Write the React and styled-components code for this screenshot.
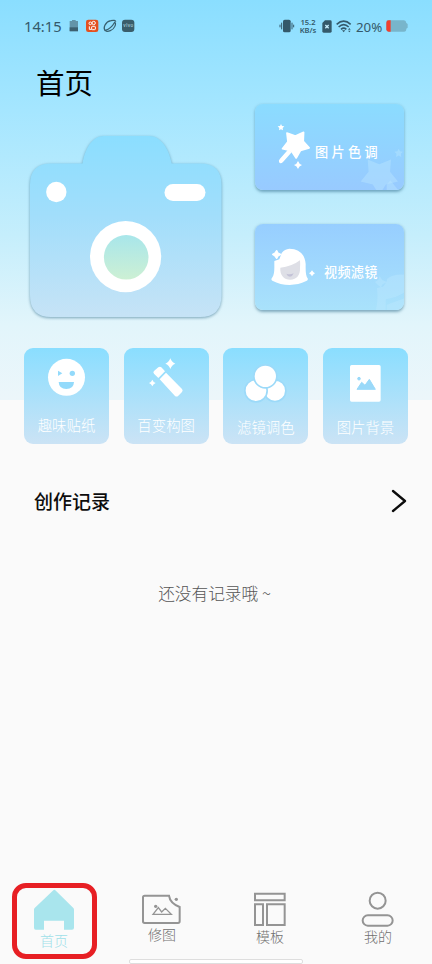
import React from "react";
import styled, { createGlobalStyle } from "styled-components";

const tools = [
  { label: "趣味贴纸", icon: "sticker", drop: 0 },
  { label: "百变构图", icon: "wand", drop: 0 },
  { label: "滤镜调色", icon: "colors", drop: 2 },
  { label: "图片背景", icon: "picture", drop: 2 },
];

const tabs = [
  { label: "首页", icon: "home", active: true, gap: 0 },
  { label: "修图", icon: "edit", gap: -6 },
  { label: "模板", icon: "template", gap: -4 },
  { label: "我的", icon: "me", gap: -4 },
];

const StatusIcons = () => (
  <svg width="68" height="16" viewBox="0 0 204 48">
    <path d="M8 9h7V6h11v3h7v30H8z" fill="#6394a9" />
    <path d="M8 28h25v12H8z" fill="#3d6070" />
    <rect x="57" y="5" width="37" height="37" rx="7" fill="#e4501f" />
    <g fill="none" stroke="#fff" strokeWidth="3">
      <circle cx="70" cy="16" r="4" />
      <circle cx="80" cy="15" r="5" />
      <rect x="74" y="25" width="11" height="10" rx="2" />
      <path d="M67 25v9h7" />
    </g>
    <g fill="none" stroke="#38606f" strokeWidth="4">
      <path d="M115 38c-8-8 0-27 17-30 8-2 14-1 14 3" />
      <path d="M143 13c6 4 0 20-13 25-8 3-13 2-15-1 11-3 22-13 28-24z" strokeWidth="3.500" />
    </g>
    <rect x="165" y="5" width="37" height="37" rx="9" fill="#3a5d6b" />
    <text x="169" y="28" fontSize="13" fill="#c5e6f2" fontFamily="Inter, sans-serif" textLength="29">
      vivo
    </text>
  </svg>
);

const VibrateIcon = () => (
  <svg width="16" height="14" viewBox="0 0 48 42">
    <rect x="12" y="2" width="23" height="38" rx="5" fill="#34596a" />
    <path d="M8 11v20M39 11v20M3 17v8M44 17v8" stroke="#34596a" strokeWidth="3" />
  </svg>
);

const SimIcon = () => (
  <svg width="10" height="13" viewBox="0 0 30 39">
    <path d="M9 1h16q4 0 4 4v29q0 4-4 4H5q-4 0-4-4V9z" fill="#34596a" />
    <path d="M10 15l10 10M20 15L10 25" stroke="#c4ecfa" strokeWidth="4" />
  </svg>
);

const WifiIcon = () => (
  <svg width="16" height="13" viewBox="0 0 48 39" fill="none" stroke="#34596a" strokeWidth="5">
    <path d="M2 13Q23-6 44 13M8 21Q23 7 38 21M15 28q8-7 16 0" />
    <path d="M18 31h10l-5 6z" fill="#34596a" stroke="none" />
    <path d="M36 29l4-5 4 5zM36 32l4 5 4-5z" fill="#34596a" stroke="none" />
  </svg>
);

const BatteryIcon = () => (
  <svg width="22" height="12" viewBox="0 0 66 36">
    <path d="M8 1h46q6 0 7 8l4 3v11l-4 3q0 9-7 9H8q-7 0-7-7V8q0-7 7-7z" fill="#78b5cb" />
    <path d="M14 1H8Q1 1 1 8v20q0 7 7 7h6z" fill="#f0402f" />
  </svg>
);

const Camera = () => (
  <svg width="208" height="196" viewBox="22 130 208 196">
    <defs>
      <linearGradient id="body" x1="0" y1="135" x2="0" y2="317" gradientUnits="userSpaceOnUse">
        <stop offset="0" stopColor="#8bdeff" />
        <stop offset="0.45" stopColor="#a2defb" />
        <stop offset="1" stopColor="#c6e3f6" />
      </linearGradient>
      <linearGradient id="lens" x1="0" y1="0" x2="0" y2="1">
        <stop offset="0" stopColor="#a8e6ea" />
        <stop offset="1" stopColor="#cdf0d4" />
      </linearGradient>
    </defs>
    <Shadowed>
      <path
        d="M51 163.500H82.500C85 149 92 136 104 136H149C161 136 169 149 171.700 163.500H200Q221.500 163.500 221.500 185V295Q221.500 317 200 317H51Q30 317 30 295V185Q30 163.500 51 163.500Z"
        fill="url(#body)"
      />
    </Shadowed>
    <circle cx="56.300" cy="192" r="10.200" fill="#fff" />
    <rect x="164.500" y="184" width="41" height="17" rx="8.500" fill="#fff" />
    <circle cx="125.600" cy="256.700" r="35.600" fill="#fff" />
    <circle cx="126.200" cy="257.300" r="22.300" fill="url(#lens)" />
  </svg>
);

// five points, one of them facing down, centred on 0,0
const Star = (props) => (
  <polygon
    points="0,42 -14,19.500 -40,13 -23,-7.500 -25,-34 0,-24 25,-34 23,-7.500 40,13 14,19.500"
    strokeLinejoin="round"
    {...props}
  />
);

const SmallStar = (props) => (
  <polygon points="0,-10 3,-4 10,-3 5,2 6,9 0,6 -6,9 -5,2 -10,-3 -3,-4" {...props} />
);

const StarIcon = () => (
  <svg width="34" height="48" viewBox="112 99 102 144" fill="#fff">
    <Star transform="translate(168 162) rotate(-2)" stroke="#fff" strokeWidth="5" />
    <path d="M147 177L156 187L130 216Q122 224 118 216Q116 212 121 206Z" />
    <SmallStar transform="translate(124 112)" />
    <path d="M175 213q3 9 12 12q-9 3-12 12q-3-9-12-12q9-3 12-12z" />
  </svg>
);

const HeadIcon = () => (
  <svg width="45" height="38" viewBox="93 118 135 114" fill="#fff">
    <path d="M148 120C180 121 195 139 197 166C197 185 196 200 204 211Q203 216 197 218C170 232 127 233 97 216Q92 212 96 208C104 196 103 185 103 157L118 152L125 133Q134 121 148 120Z" />
    <path d="M121 177Q155 174 180 155Q181 166 180 177C181 200 170 212 151 213C132 213 119 199 121 177Z" fill="#dedfe6" />
    <path d="M139 195Q150 199 161 194Q158 203 150 204Q142 203 139 195Z" fill="#c3c2d6" />
    <path d="M110 126l4 7 8 4-8 5-4 7-5-7-7-5 7-4z" stroke="#fff" strokeWidth="4" strokeLinejoin="round" />
    <path d="M216 185q3 6 9 9q-6 3-9 9q-3-6-9-9q6-3 9-9z" />
  </svg>
);

const ToolIcon = ({ name }) => (
  <svg width="85" height="60" viewBox="0 0 255 180" fill="#fff">
    {name === "sticker" && (
      <>
        <circle cx="127.500" cy="88" r="55.500" />
        <g fill="#93dafb">
          <circle cx="145" cy="76" r="8" />
          <path d="M102 68l13 8-13 8zM104 102h46q-1 21-23 21t-23-21z" />
        </g>
      </>
    )}
    {name === "wand" && (
      <>
        <path d="M103 58Q108 54 112 58L123 70L103 90L90 77Q86 73 90 69Z" />
        <path d="M126 74L174 123Q178 127 174 132L163 143Q158 148 153 144L107 94Z" />
        <path d="M139 31q4 12 15 16q-11 4-15 16q-4-12-15-16q11-4 15-16zM85 95q3 8 10 10q-7 2-10 10q-3-8-10-10q7-2 10-10z" />
      </>
    )}
    {name === "colors" && (
      <g stroke="#9cdaf9" strokeWidth="5">
        <circle cx="156" cy="128" r="32.500" />
        <circle cx="99" cy="128" r="33.500" />
        <circle cx="127" cy="85" r="34.500" />
      </g>
    )}
    {name === "picture" && (
      <>
        <rect x="81" y="51" width="92" height="110" rx="5" />
        <g fill="#9ad9f9" stroke="#9ad9f9" strokeLinejoin="round" strokeWidth="3">
          <circle cx="108" cy="92" r="4" />
          <path d="M102 124l14-21 10 9 13-18 18 30z" />
        </g>
      </>
    )}
  </svg>
);

const TabIcon = ({ name }) => (
  <svg width="48" height="44" viewBox="0 0 144 132" fill="none" stroke="#949494" strokeWidth="6">
    {name === "home" && (
      <path
        d="M70 4Q73 1 76 4L130 57Q132 59 132 62V116Q132 122 126 122H102V95H42V122H17Q12 122 12 116V62Q12 59 14 57Z"
        fill="#a9e5ed"
        stroke="none"
      />
    )}
    {name === "edit" && (
      <>
        <path d="M20 20H93Q96 43 125 54V97Q125 102 120 102H20Q15 102 15 97V25Q15 20 20 20Z" />
        <path d="M45 76L61 56L71 69L82 58L100 76Z" strokeWidth="4" />
        <g fill="#949494" stroke="none">
          <circle cx="53" cy="52" r="5" />
          <circle cx="115" cy="31" r="5" />
        </g>
      </>
    )}
    {name === "template" && (
      <path d="M27 14H116V34H27ZM27 46H51V108H27ZM63 46H116V108H63Z" />
    )}
    {name === "me" && (
      <>
        <circle cx="71" cy="35" r="24" />
        <rect x="26" y="79" width="90" height="31" rx="15.500" />
      </>
    )}
  </svg>
);

const App = () => {
  return (
    <Page>
      <GlobalStyle />
      <StatusBar>
        <Clock>14:15</Clock>
        <StatusIcons />
        <StatusRight>
          <VibrateIcon />
          <Speed>15.2 KB/s</Speed>
          <SimIcon />
          <WifiIcon />
          <Percent>20%</Percent>
          <BatteryIcon />
        </StatusRight>
      </StatusBar>
      <Title>首页</Title>
      <Hero>
        <Camera />
        <Cards>
          <Card $from="#8bdcff" $to="#98caff">
            <Decoration width="149" height="86" viewBox="46 39 447 258">
              <Star transform="translate(419 253) scale(1.400)" />
              <path d="M441 281L452 268L482 305H441Z" />
              <SmallStar transform="translate(477 186) scale(1.300)" />
            </Decoration>
            <StarIcon />
            <CardLabel $left={4} $top={10} $space={3.3}>图片色调</CardLabel>
          </Card>
          <Card $from="#97ceff" $to="#a9e2fb">
            <Decoration width="149" height="86" viewBox="46 36 447 258">
              <path d="M420 192l8 12 14 6-13 7-6 9-9-8-8-8 10-7zM442 201Q460 184 497 188V240Q470 258 438 262V294H409Q416 265 412 228L430 224L441 209ZM441 278L497 258V294H441Z" />
            </Decoration>
            <HeadIcon />
            <CardLabel $left={8} $top={9} $space={0.2}>视频滤镜</CardLabel>
          </Card>
        </Cards>
      </Hero>
      <Tools>
        {tools.map((tool) => (
          <Tool key={tool.label}>
            <ToolIcon name={tool.icon} />
            <ToolLabel $drop={tool.drop}>{tool.label}</ToolLabel>
          </Tool>
        ))}
      </Tools>
      <SectionHeader>
        <h2>创作记录</h2>
        <svg width="16" height="24" viewBox="0 0 16 24" fill="none" stroke="#0c0c0c" strokeWidth="2.300" strokeLinecap="round">
          <path d="M2 2L14 12L2 22" strokeLinejoin="round" />
        </svg>
      </SectionHeader>
      <Empty>还没有记录哦 ~</Empty>
      <TabBar>
        {tabs.map((tab) => (
          <Tab key={tab.label} $active={tab.active}>
            <TabIcon name={tab.icon} />
            <TabLabel $gap={tab.gap}>{tab.label}</TabLabel>
            {tab.active && <Highlight />}
          </Tab>
        ))}
        <HomeIndicator />
      </TabBar>
    </Page>
  );
};

export default App;

const GlobalStyle = createGlobalStyle`
  * {
    box-sizing: border-box;
  }
  body {
    margin: 0;
    font-family: "Noto Sans CJK SC", sans-serif;
  }
  svg {
    display: block;
    flex-shrink: 0;
  }
`;

const Page = styled.div`
  width: 432px;
  height: 964px;
  overflow: hidden;
  display: flex;
  flex-direction: column;
  background: linear-gradient(#8adeff 0, #a5e6ff 110px, #c5eefc 235px, #e2f5fb 325px, #ecf6fa 400px, #fafafa 400px);
`;

const StatusBar = styled.div`
  height: 52px;
  padding: 0 24px;
  display: flex;
  align-items: center;
  color: #34596a;
  font-family: "Noto Sans", sans-serif;
`;

const Clock = styled.span`
  width: 43px;
  font-size: 14.700px;
  line-height: 20px;
  white-space: nowrap;
`;

const StatusRight = styled.div`
  display: flex;
  align-items: center;
  margin-left: auto;
`;

const Speed = styled.div`
  width: 20px;
  margin: 0 4px 0 3px;
  font-size: 7.600px;
  font-weight: 600;
  line-height: 8px;
  text-align: center;

  & + svg {
    margin-right: 4px;
  }
`;

const Percent = styled.span`
  width: 26px;
  margin: 1px 4px 0;
  font-size: 13.300px;
  line-height: 18px;
`;

const Title = styled.h1`
  height: 52px;
  margin: 0;
  padding: 9px 0 0 36px;
  font-size: 28.500px;
  font-weight: 400;
  line-height: 42px;
  color: #000;
`;

const Hero = styled.div`
  height: 244px;
  padding: 0 28px 0 22px;
  display: flex;
  justify-content: space-between;

  > svg {
    margin-top: 26px;
  }
`;

const Shadowed = styled.g`
  filter: drop-shadow(0 1px 1.500px rgba(50, 110, 140, 0.6));
`;

const Cards = styled.div`
  display: flex;
  flex-direction: column;
  gap: 34px;
`;

const Card = styled.div`
  position: relative;
  width: 149px;
  height: 86px;
  padding-left: 22px;
  display: flex;
  align-items: center;
  overflow: hidden;
  border-radius: 8px;
  background: linear-gradient(${(p) => p.$from}, ${(p) => p.$to});
  box-shadow: 0 1.500px 3px rgba(50, 110, 140, 0.55);

  & + & {
    padding-left: 16px;
  }
`;

const Decoration = styled.svg`
  position: absolute;
  inset: 0;
  fill: rgba(190, 232, 255, 0.4);
`;

const CardLabel = styled.span`
  margin-left: ${(p) => p.$left}px;
  padding-top: ${(p) => p.$top}px;
  font-size: 13.200px;
  font-weight: 500;
  line-height: 20px;
  letter-spacing: ${(p) => p.$space}px;
  white-space: nowrap;
  color: #fff;
`;

const Tools = styled.div`
  display: grid;
  grid-template-columns: repeat(4, 85px);
  justify-content: space-between;
  padding: 0 24px;
`;

const Tool = styled.div`
  height: 96px;
  display: flex;
  flex-direction: column;
  align-items: center;
  border-radius: 9px;
  background: linear-gradient(#8adeff, #cbe3f5);
`;

const ToolLabel = styled.span`
  padding-top: ${(p) => 7 + p.$drop}px;
  font-size: 14.400px;
  font-weight: 300;
  line-height: 20px;
  color: #fff;
`;

const SectionHeader = styled.div`
  height: 113px;
  padding: 0 25px 0 34px;
  display: flex;
  align-items: center;
  justify-content: space-between;

  h2 {
    margin: 0;
    font-size: 19px;
    font-weight: 500;
    line-height: 28px;
    color: #0c0c0c;
  }
`;

const Empty = styled.p`
  margin: 23px 0 0;
  padding-right: 3px;
  font-size: 16.700px;
  font-weight: 300;
  line-height: 26px;
  text-align: center;
  color: #555;
`;

const TabBar = styled.div`
  position: relative;
  height: 75px;
  margin-top: auto;
  display: grid;
  grid-template-columns: repeat(4, 1fr);
`;

const Tab = styled.div`
  position: relative;
  display: flex;
  flex-direction: column;
  align-items: center;
  color: ${(p) => (p.$active ? "#9fe0e9" : "#707070")};
`;

const TabLabel = styled.span`
  margin-top: ${(p) => p.$gap}px;
  font-size: 14px;
  font-weight: 300;
  line-height: 15px;
`;

const Highlight = styled.div`
  position: absolute;
  left: 12px;
  top: -6px;
  width: 85px;
  height: 76px;
  border: 5px solid #e71f24;
  border-radius: 14px;
`;

const HomeIndicator = styled.div`
  position: absolute;
  left: 129px;
  bottom: 0;
  width: 174px;
  height: 5px;
  border: 1px solid #dedede;
  border-radius: 2px;
  background: #fff;
`;
